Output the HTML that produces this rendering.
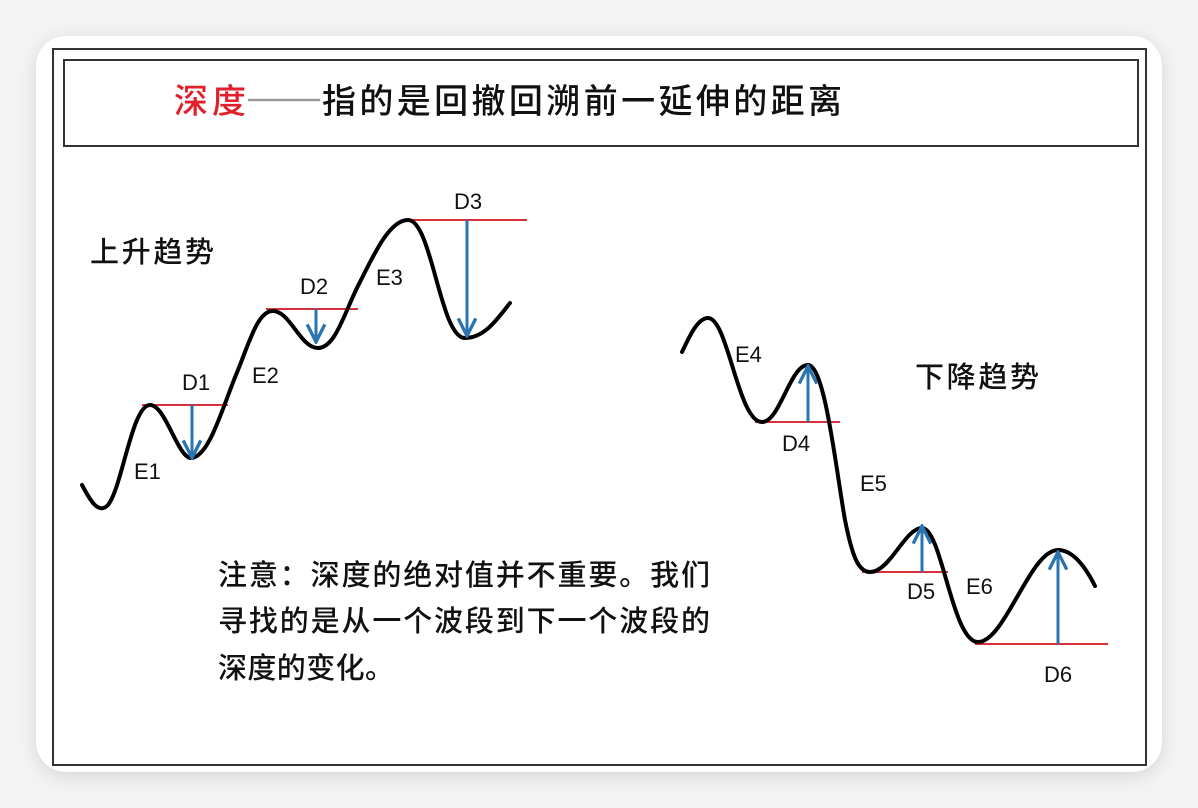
<!DOCTYPE html>
<html><head><meta charset="utf-8"><style>
html,body{margin:0;padding:0;background:#f3f3f3;width:1198px;height:808px;overflow:hidden}
.card{position:absolute;left:36px;top:36px;width:1126px;height:736px;background:#fff;border-radius:30px;box-shadow:0 4px 18px rgba(0,0,0,0.12)}
svg{position:absolute;left:0;top:0}
text{font-family:"Liberation Sans","Noto Sans CJK SC",sans-serif}
.c{font-weight:500}
</style></head><body>
<div class="card"></div>
<svg width="1198" height="808" viewBox="0 0 1198 808">
<defs>
<marker id="a" viewBox="0 0 20 20" markerWidth="22" markerHeight="22" refX="18" refY="10" orient="auto" markerUnits="userSpaceOnUse"><path d="M2,2 L18,10 L2,18" fill="none" stroke="#2a74b0" stroke-width="3"/></marker></defs>
<rect x="53" y="49" width="1093" height="716" fill="none" stroke="#333" stroke-width="2"/>
<rect x="64" y="60" width="1074" height="86" fill="none" stroke="#333" stroke-width="2"/>
<text class="c" x="174" y="113" font-size="34" fill="#e0202a" textLength="72">深度</text>
<line x1="248" y1="100" x2="320" y2="100" stroke="#999" stroke-width="2.5"/>
<text class="c" x="322" y="113" font-size="34" fill="#111" textLength="520">指的是回撤回溯前一延伸的距离</text>
<text class="c" x="90" y="262" font-size="29" fill="#111" textLength="124">上升趋势</text>
<text class="c" x="915" y="387" font-size="29" fill="#111" textLength="124">下降趋势</text>
<g font-size="29" fill="#111" class="c">
<text x="218" y="585" textLength="492">注意：深度的绝对值并不重要。我们</text>
<text x="218" y="631" textLength="492">寻找的是从一个波段到下一个波段的</text>
<text x="218" y="678" textLength="176">深度的变化。</text>
</g>
<g stroke="#d8303c" stroke-width="2">
<line x1="142" y1="405" x2="228" y2="405"/><line x1="266" y1="309" x2="358" y2="309"/><line x1="405" y1="220" x2="527" y2="220"/>
<line x1="755" y1="422" x2="840" y2="422"/><line x1="862" y1="572" x2="948" y2="572"/><line x1="975" y1="644" x2="1108" y2="644"/>
</g>
<g fill="none" stroke="#000" stroke-width="4" stroke-linecap="round">
<path d="M82,485 C90,500 98,515 108,505 C122,488 132,405 150,405 C166,405 178,460 192,458 C210,455 222,408 238,370 C250,340 258,312 272,311 C290,310 300,348 318,348 C336,348 345,310 360,282 C375,252 390,220 408,220 C432,220 440,338 465,338 C485,338 498,318 510,303"/>
<path d="M682,352 C690,335 698,318 708,318 C728,318 738,422 762,422 C780,422 790,365 808,365 C825,365 836,470 845,520 C852,555 858,572 870,572 C890,572 905,528 922,528 C942,528 952,642 978,642 C1005,642 1030,550 1058,550 C1075,550 1088,572 1095,586"/>
</g>
<g stroke="#2a74b0" stroke-width="3" marker-end="url(#a)">
<line x1="192" y1="405" x2="192" y2="458"/><line x1="316" y1="309" x2="316" y2="342"/><line x1="467" y1="220" x2="467" y2="336"/>
<line x1="808" y1="422" x2="808" y2="366"/><line x1="922" y1="572" x2="922" y2="526"/><line x1="1058" y1="644" x2="1058" y2="552"/>
</g>
<g font-size="22" fill="#111">
<text x="182" y="390">D1</text><text x="300" y="294">D2</text><text x="454" y="209">D3</text>
<text x="134" y="479">E1</text><text x="252" y="383">E2</text><text x="376" y="285">E3</text>
<text x="735" y="362">E4</text><text x="782" y="451">D4</text><text x="860" y="491">E5</text>
<text x="907" y="599">D5</text><text x="966" y="594">E6</text><text x="1044" y="682">D6</text>
</g>
</svg>
</body></html>
